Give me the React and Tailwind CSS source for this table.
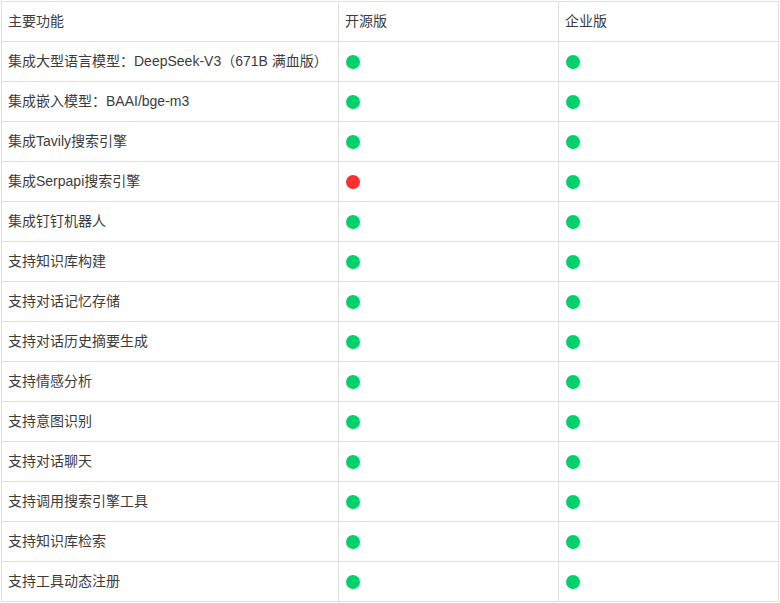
const rows = [
  ["集成大型语言模型：DeepSeek-V3（671B 满血版）", true, true],
  ["集成嵌入模型：BAAI/bge-m3", true, true],
  ["集成Tavily搜索引擎", true, true],
  ["集成Serpapi搜索引擎", false, true],
  ["集成钉钉机器人", true, true],
  ["支持知识库构建", true, true],
  ["支持对话记忆存储", true, true],
  ["支持对话历史摘要生成", true, true],
  ["支持情感分析", true, true],
  ["支持意图识别", true, true],
  ["支持对话聊天", true, true],
  ["支持调用搜索引擎工具", true, true],
  ["支持知识库检索", true, true],
  ["支持工具动态注册", true, true],
];

const Dot = ({ ok }) => (
  <span
    className={`inline-block w-[14px] h-[14px] rounded-full align-middle ${
      ok ? "bg-[#00d26a]" : "bg-[#f8312f]"
    }`}
  />
);

export default function App() {
  return (
    <div className="bg-white min-h-screen pt-px pl-px font-['Liberation_Sans','Noto_Sans_CJK_SC',sans-serif] text-[14px] text-[#3c3c3c]">
      <table className="table-fixed border-collapse w-[777px]">
        <colgroup>
          <col className="w-[337px]" />
          <col className="w-[220px]" />
          <col className="w-[220px]" />
        </colgroup>
        <thead>
          <tr>
            <th className="h-10 border border-[#dfdfdf] px-[6px] text-left font-normal">主要功能</th>
            <th className="h-10 border border-[#dfdfdf] px-[6px] text-left font-normal">开源版</th>
            <th className="h-10 border border-[#dfdfdf] px-[6px] text-left font-normal">企业版</th>
          </tr>
        </thead>
        <tbody>
          {rows.map(([name, open, ent]) => (
            <tr key={name}>
              <td className="h-10 border border-[#dfdfdf] px-[6px]">{name}</td>
              <td className="h-10 border border-[#dfdfdf] px-[7px]">
                <Dot ok={open} />
              </td>
              <td className="h-10 border border-[#dfdfdf] px-[7px]">
                <Dot ok={ent} />
              </td>
            </tr>
          ))}
        </tbody>
      </table>
    </div>
  );
}
